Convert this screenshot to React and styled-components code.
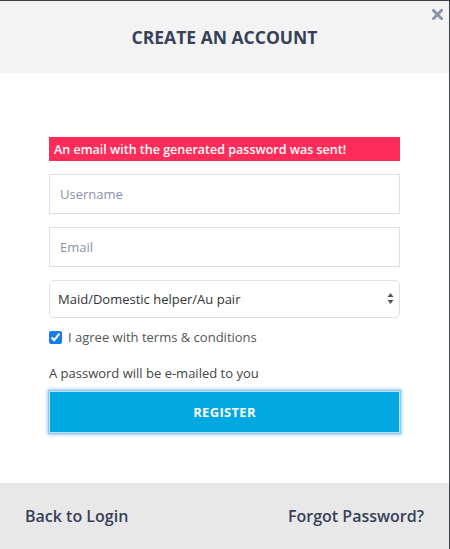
import styled, { createGlobalStyle } from "styled-components";

const GlobalStyle = createGlobalStyle`
  html, body {
    margin: 0;
    padding: 0;
    background: #3b4249;
  }
  body {
    font-family: "Open Sans", "Liberation Sans", sans-serif;
  }
`;

const Modal = styled.div`
  width: 449px;
  height: 548px;
  margin-top: 1px;
  background: #fff;
  display: flex;
  flex-direction: column;
  position: relative;
`;

const Header = styled.div`
  height: 72px;
  background: #f3f3f3;
  display: flex;
  align-items: center;
  justify-content: center;
`;

const Title = styled.h2`
  margin: 0;
  font-size: 17.5px;
  font-weight: 700;
  color: #364158;
`;

const Close = styled.button`
  position: absolute;
  top: 6px;
  right: 5px;
  border: 0;
  background: none;
  padding: 0;
  width: 14px;
  height: 14px;
  display: flex;
  align-items: center;
  justify-content: center;
  cursor: pointer;
`;

const Body = styled.form`
  flex: 1;
  padding: 64px 49px 0 49px;
  display: flex;
  flex-direction: column;
`;

const Alert = styled.div`
  height: 24px;
  background: #ff2c5a;
  color: #fff;
  font-size: 12.5px;
  font-weight: 600;
  display: flex;
  align-items: center;
  padding-left: 5px;
  margin-bottom: 13px;
`;

const Input = styled.input`
  box-sizing: border-box;
  height: 40px;
  width: 100%;
  border: 1px solid #dde1e7;
  padding: 0 10px;
  font-family: inherit;
  font-size: 13px;
  color: #333;
  margin-bottom: 13px;
  outline: none;
  &::placeholder {
    color: #8891a8;
  }
`;

const SelectWrap = styled.div`
  position: relative;
  margin-bottom: 10px;
`;

const Select = styled.select`
  box-sizing: border-box;
  width: 100%;
  height: 38px;
  border: 1px solid #dde1e7;
  border-radius: 5px;
  background: #fff;
  padding: 0 8px;
  font-family: inherit;
  font-size: 13px;
  color: #333;
  appearance: none;
  outline: none;
`;

const Arrows = styled.svg`
  position: absolute;
  right: 6px;
  top: 12px;
  pointer-events: none;
`;

const CheckRow = styled.label`
  display: flex;
  align-items: center;
  gap: 6px;
  font-size: 13px;
  color: #555;
  margin-bottom: 18px;
`;

const Check = styled.input`
  margin: 0;
  width: 13px;
  height: 13px;
  accent-color: #1a7ce8;
`;

const Note = styled.p`
  margin: 0 0 9px 0;
  font-size: 13px;
  color: #444;
`;

const Register = styled.button`
  box-sizing: border-box;
  height: 42px;
  width: 100%;
  background: #00a8e1;
  color: #fff;
  border: 1px solid #bfe9f8;
  font-family: inherit;
  font-size: 13px;
  font-weight: 700;
  letter-spacing: 0.3px;
  box-shadow: 0 0 0 1px #8cc3f4, 0 0 3px 2px #a3cff7;
  cursor: pointer;
`;

const Footer = styled.div`
  height: 66px;
  background: #e8e8e8;
  display: flex;
  align-items: center;
  justify-content: space-between;
  padding: 0 25px;
`;

const FooterLink = styled.a`
  font-size: 16px;
  font-weight: 600;
  color: #364158;
  text-decoration: none;
  cursor: pointer;
`;

function App() {
  return (
    <>
      <GlobalStyle />
      <Modal>
        <Header>
          <Title>CREATE AN ACCOUNT</Title>
        </Header>
        <Close aria-label="close">
          <svg width="11" height="11" viewBox="0 0 11 11">
            <path d="M1.5 1.5 L9.5 9.5 M9.5 1.5 L1.5 9.5" stroke="#8a94a8" strokeWidth="3" strokeLinecap="square" />
          </svg>
        </Close>
        <Body onSubmit={(e) => e.preventDefault()}>
          <Alert>An email with the generated password was sent!</Alert>
          <Input type="text" placeholder="Username" />
          <Input type="email" placeholder="Email" />
          <SelectWrap>
            <Select defaultValue="maid">
              <option value="maid">Maid/Domestic helper/Au pair</option>
              <option value="family">Family/Employer</option>
            </Select>
            <Arrows width="7" height="13" viewBox="0 0 7 13">
              <path d="M0.5 5 L3.5 1 L6.5 5 Z" fill="#555" />
              <path d="M0.5 8 L3.5 12 L6.5 8 Z" fill="#555" />
            </Arrows>
          </SelectWrap>
          <CheckRow>
            <Check type="checkbox" defaultChecked />
            I agree with terms &amp; conditions
          </CheckRow>
          <Note>A password will be e-mailed to you</Note>
          <Register type="submit">REGISTER</Register>
        </Body>
        <Footer>
          <FooterLink>Back to Login</FooterLink>
          <FooterLink>Forgot Password?</FooterLink>
        </Footer>
      </Modal>
    </>
  );
}

export default App;
